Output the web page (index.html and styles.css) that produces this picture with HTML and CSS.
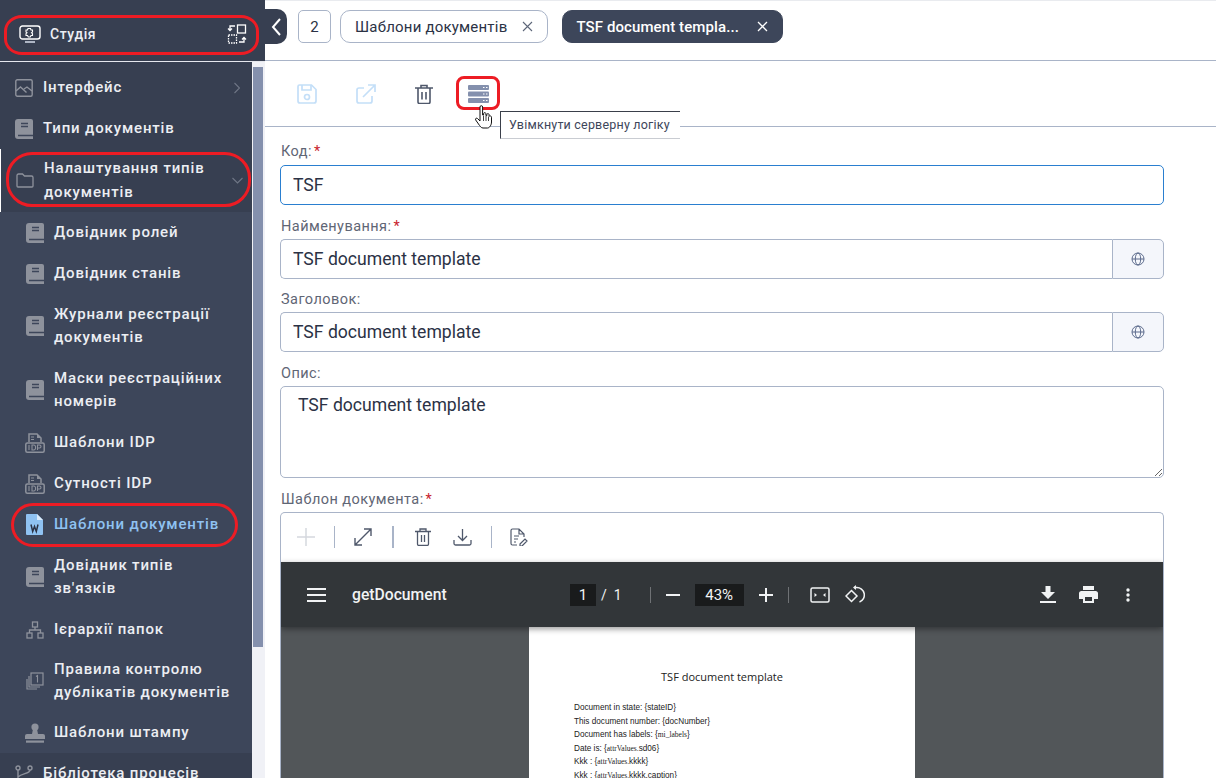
FILE: index.html
```html
<!DOCTYPE html>
<html lang="uk">
<head>
    <meta charset="UTF-8">
    <title>TSF document template</title>
    <link rel="stylesheet" href="styles.css">
</head>
<body>
    <svg class="defs" width="0" height="0">
        <symbol id="book" viewBox="0 0 18 20">
            <path d="M3 0h13a2 2 0 0 1 2 2v18H3a3 3 0 0 1-3-3V3a3 3 0 0 1 3-3z" fill="#8e929c"/>
            <path d="M6 4.500h7M6 7.500h7M3 16.500h15" stroke="#3d465a" stroke-width="1.400"/>
        </symbol>
        <symbol id="idp" viewBox="0 0 20 20">
            <path d="M4 9V1h8l4 4v4" fill="none" stroke="#8e929c" stroke-width="1.500"/>
            <path d="M12 1v4h4z" fill="#8e929c"/>
            <path d="M6 4h3M6 6.500h3" stroke="#8e929c" stroke-width="1.200"/>
            <rect x=".8" y="10" width="18.400" height="9.200" rx="1.500" fill="none" stroke="#8e929c" stroke-width="1.500"/>
            <path d="M4 12v5M7 12v5h2a2 2 0 0 0 1.500-2.500A2 2 0 0 0 9 12zM12.500 17v-5h2a1.500 1.500 0 0 1 0 3h-2" fill="none" stroke="#8e929c" stroke-width="1.100"/>
        </symbol>
    </svg>

    <aside class="sidebar">
        <div class="studio">
            <svg class="studio-icon" width="22" height="18" viewBox="0 0 22 18"><rect x="1" y="1" width="20" height="13" rx="2.500" fill="none" stroke="#fff" stroke-width="1.400"/><path d="M6 17h10" stroke="#aeb5c4" stroke-width="2"/><path d="M9 3.500h2.500l.5 1.500h1.500v2l-1 .7 1 1V10.500H12L11.200 12H9.300l-.8-1.500H7V8.700l1-1-1-.7V5h1.500z" fill="none" stroke="#fff" stroke-width="1.100"/></svg>
            <span class="studio-name">Студія</span>
            <svg class="studio-switch" width="20" height="20" viewBox="0 0 20 20" fill="none" stroke="#fff" stroke-width="1.300"><rect x="10.500" y="1" width="8" height="8"/><rect x="1.500" y="11" width="8" height="8" stroke-dasharray="1.500 1"/><path d="M8 2H3v4M1 4.500l2 2 2-2M12 18h5v-4M15 15.500l2-2 2 2"/></svg>
        </div>
        <div class="menu-wrap">
            <nav class="menu">
                <div class="group first">
                    <div class="item top">
                        <svg class="ico" width="18" height="18" viewBox="0 0 18 18" fill="none" stroke="#8e929c" stroke-width="1.400"><rect x=".8" y=".8" width="16.400" height="16.400" rx="1.500"/><path d="M1 12l4.500-4 6 5.500M9 10l3-2 5 4"/></svg>
                        <span>Інтерфейс</span>
                        <svg class="chev" width="6" height="12" viewBox="0 0 6 12" fill="none" stroke="#6f7686" stroke-width="1.100"><path d="M.5 1l5 5-5 5"/></svg>
                    </div>
                    <div class="item top">
                        <svg class="ico" width="18" height="20"><use href="#book"/></svg>
                        <span>Типи документів</span>
                    </div>
                    <div class="item top double active">
                        <svg class="ico" width="18" height="15" viewBox="0 0 18 15" fill="none" stroke="#8e929c" stroke-width="1.300"><path d="M1 13V2.500A1.500 1.500 0 0 1 2.500 1h4l2 2h7A1.500 1.500 0 0 1 17 4.500V13a1 1 0 0 1-1 1H2a1 1 0 0 1-1-1z"/></svg>
                        <span>Налаштування типів документів</span>
                        <svg class="chev" width="11" height="7" viewBox="0 0 11 7" fill="none" stroke="#6f7686" stroke-width="1.100"><path d="M.5 1l5 5 5-5"/></svg>
                    </div>
                </div>
                <div class="group sub">
                    <div class="item"><svg class="ico" width="18" height="20"><use href="#book"/></svg><span>Довідник ролей</span></div>
                    <div class="item"><svg class="ico" width="18" height="20"><use href="#book"/></svg><span>Довідник станів</span></div>
                    <div class="item double"><svg class="ico" width="18" height="20"><use href="#book"/></svg><span>Журнали реєстрації документів</span></div>
                    <div class="item double"><svg class="ico" width="18" height="20"><use href="#book"/></svg><span>Маски реєстраційних номерів</span></div>
                    <div class="item"><svg class="ico wide" width="20" height="20"><use href="#idp"/></svg><span>Шаблони IDP</span></div>
                    <div class="item"><svg class="ico wide" width="20" height="20"><use href="#idp"/></svg><span>Сутності IDP</span></div>
                    <div class="item current">
                        <svg class="ico word" width="17" height="21" viewBox="0 0 17 21"><path d="M1 0h10l6 6v14a1 1 0 0 1-1 1H1a1 1 0 0 1-1-1V1a1 1 0 0 1 1-1z" fill="#8fc2f2"/><path d="M11 0l6 6h-6z" fill="#dcecfb"/><path d="M3.500 10.500l1.700 7 1.800-5 1.800 5 1.700-7" fill="none" stroke="#2b3245" stroke-width="1.500" transform="translate(1.500 0)"/></svg>
                        <span>Шаблони документів</span>
                    </div>
                    <div class="item double"><svg class="ico" width="18" height="20"><use href="#book"/></svg><span>Довідник типів зв'язків</span></div>
                    <div class="item">
                        <svg class="ico" width="18" height="18" viewBox="0 0 18 18" fill="none" stroke="#8e929c" stroke-width="1.300"><rect x="6.500" y="1" width="5" height="5"/><rect x="1" y="12" width="5" height="5"/><rect x="12" y="12" width="5" height="5"/><path d="M9 6v3M3.500 12V9h11v3"/></svg>
                        <span>Ієрархії папок</span>
                    </div>
                    <div class="item double short">
                        <svg class="ico" width="18" height="18" viewBox="0 0 18 18" fill="none" stroke="#8e929c" stroke-width="1.200"><rect x="5" y="1" width="12" height="12"/><path d="M3 4v11h11M1 7v10h10"/><path d="M10 4.500l1.500-1v7" stroke-width="1.100"/></svg>
                        <span>Правила контролю дублікатів документів</span>
                    </div>
                    <div class="item">
                        <svg class="ico wide" width="20" height="20" viewBox="0 0 20 20" fill="#8e929c"><circle cx="10" cy="4" r="3.600"/><path d="M8 6h4l1 5h5a2 2 0 0 1 2 2v3H0v-3a2 2 0 0 1 2-2h5z"/><rect x="1" y="17.500" width="18" height="2.200"/></svg>
                        <span>Шаблони штампу</span>
                    </div>
                </div>
                <div class="group">
                    <div class="item top">
                        <svg class="ico" width="18" height="18" viewBox="0 0 18 18" fill="none" stroke="#8e929c" stroke-width="1.400"><circle cx="3" cy="3" r="2"/><circle cx="15" cy="3" r="2"/><path d="M3 5v12M15 5c0 4-8 3-12 7"/></svg>
                        <span>Бібліотека процесів</span>
                    </div>
                </div>
            </nav>
            <div class="scrollbar"><div class="thumb"></div></div>
        </div>
    </aside>

    <main class="main">
        <div class="tabs">
            <button class="collapse"><svg width="10" height="18" viewBox="0 0 10 18" fill="none" stroke="#fff" stroke-width="2"><path d="M9 1L2 9l7 8"/></svg></button>
            <span class="tab count">2</span>
            <span class="tab">Шаблони документів<svg class="x" width="11" height="11" viewBox="0 0 11 11" stroke="#5d6679" stroke-width="1.100"><path d="M1 1l9 9M10 1l-9 9"/></svg></span>
            <span class="tab dark">TSF document templa...<svg class="x" width="11" height="11" viewBox="0 0 11 11" stroke="#fff" stroke-width="1.300"><path d="M1 1l9 9M10 1l-9 9"/></svg></span>
        </div>

        <div class="toolbar">
            <svg width="20" height="20" viewBox="0 0 20 20" fill="none" stroke="#c4dff8" stroke-width="1.700"><path d="M2.500 1h12L19 5.500V17a2 2 0 0 1-2 2H3a2 2 0 0 1-2-2V2.500A1.500 1.500 0 0 1 2.500 1z"/><path d="M5 1v5h9V1"/><circle cx="10" cy="13" r="2.500"/></svg>
            <svg width="20" height="20" viewBox="0 0 20 20" fill="none" stroke="#c4dff8" stroke-width="1.700"><path d="M16 12v5a2 2 0 0 1-2 2H3a2 2 0 0 1-2-2V6a2 2 0 0 1 2-2h5"/><path d="M7 13L19 1M12 1h7v7"/></svg>
            <svg width="18" height="20" viewBox="0 0 18 20" fill="none" stroke="#4f586b" stroke-width="1.600"><path d="M0 4h18M6 4V1.500h6V4M3 4v14a1.500 1.500 0 0 0 1.500 1.500h9A1.500 1.500 0 0 0 15 18V4M7 8v7.500M11 8v7.500"/></svg>
            <svg class="server" width="21" height="18" viewBox="0 0 21 18"><rect width="21" height="5" rx="1" fill="#8490ad"/><rect y="6.500" width="21" height="5" rx="1" fill="#8490ad"/><rect y="13" width="21" height="5" rx="1" fill="#8490ad"/><path d="M15 2.500h1.500M18 2.500h1.500M15 9h1.500M18 9h1.500M15 15.500h1.500M18 15.500h1.500" stroke="#fff" stroke-width="1"/></svg>
        </div>

        <form class="form">
            <label class="label label-first">Код:<em>*</em></label>
            <input class="input focus" value="TSF">

            <label class="label">Найменування:<em>*</em></label>
            <div class="input-group">
                <input class="input" value="TSF document template">
                <span class="addon"><svg width="14" height="14" viewBox="0 0 14 14" fill="none" stroke="#5c6b8c" stroke-width="1"><circle cx="7" cy="7" r="6"/><ellipse cx="7" cy="7" rx="2.700" ry="6"/><path d="M1 7h12"/></svg></span>
            </div>

            <label class="label label-tight">Заголовок:</label>
            <div class="input-group">
                <input class="input" value="TSF document template">
                <span class="addon"><svg width="14" height="14" viewBox="0 0 14 14" fill="none" stroke="#5c6b8c" stroke-width="1"><circle cx="7" cy="7" r="6"/><ellipse cx="7" cy="7" rx="2.700" ry="6"/><path d="M1 7h12"/></svg></span>
            </div>

            <label class="label">Опис:</label>
            <textarea class="input area">TSF document template</textarea>

            <label class="label">Шаблон документа:<em>*</em></label>
            <div class="doc-box">
                <div class="doc-tools">
                    <svg width="20" height="20" viewBox="0 0 20 20" stroke="#d5d8de" stroke-width="1.500"><path d="M10 1v18M1 10h18"/></svg>
                    <i class="sep"></i>
                    <svg width="20" height="20" viewBox="0 0 20 20" fill="none" stroke="#4f586b" stroke-width="1.400"><path d="M2 18L18 2M11 2h7v7M2 11v7h7"/></svg>
                    <i class="sep thick"></i>
                    <svg width="16" height="18" viewBox="0 0 16 18" fill="none" stroke="#4f586b" stroke-width="1.300"><path d="M0 3.500h16M5 3.500V1h6v2.500M2.500 3.500V16A1.500 1.500 0 0 0 4 17.500h8a1.500 1.500 0 0 0 1.500-1.500V3.500M6.500 7v7M9.500 7v7"/></svg>
                    <svg class="tool-down" width="19" height="18" viewBox="0 0 19 18" fill="none" stroke="#4f586b" stroke-width="1.300"><path d="M9.500 1v11M5 8l4.500 4.500L14 8M1 12v3.500A1.500 1.500 0 0 0 2.500 17h14a1.500 1.500 0 0 0 1.500-1.500V12"/></svg>
                    <i class="sep"></i>
                    <svg width="18" height="18" viewBox="0 0 18 18" fill="none" stroke="#4f586b" stroke-width="1.200"><path d="M7 17H2.500A1.500 1.500 0 0 1 1 15.500v-13A1.500 1.500 0 0 1 2.500 1H9l5 5v3M9 1v5h5M4 8h5M4 11h4M4 14h2M10 16l5-5 2 2-5 5h-2z"/></svg>
                </div>
                <div class="pdf-bar">
                    <svg class="hamb" width="19" height="14" viewBox="0 0 19 14" stroke="#f1f3f4" stroke-width="2"><path d="M0 1h19M0 7h19M0 13h19"/></svg>
                    <span class="pdf-title">getDocument</span>
                    <span class="pdf-box page-num">1</span>
                    <span class="pdf-text slash">/</span>
                    <span class="pdf-text pages">1</span>
                    <i class="pdf-sep first"></i>
                    <svg class="zoom-out" width="14" height="2" viewBox="0 0 14 2" stroke="#f1f3f4" stroke-width="2"><path d="M0 1h14"/></svg>
                    <span class="pdf-box zoom-val">43%</span>
                    <svg class="zoom-in" width="14" height="14" viewBox="0 0 14 14" stroke="#f1f3f4" stroke-width="2"><path d="M0 7h14M7 0v14"/></svg>
                    <i class="pdf-sep"></i>
                    <svg class="fit" width="20" height="16" viewBox="0 0 20 16" fill="none" stroke="#f1f3f4" stroke-width="1.500"><rect x="1" y="1" width="18" height="14" rx="1.500"/><path d="M7 8L4.500 6v4zM13 8l2.500-2v4z" fill="#f1f3f4" stroke="none"/></svg>
                    <svg class="rotate" width="20" height="20" viewBox="0 0 20 20" fill="none" stroke="#f1f3f4" stroke-width="1.500"><path d="M1 11l5.500-5.500 5.500 5.500-5.500 5.500z"/><path d="M9 2.500h2.500a7.500 7.500 0 0 1 3 14.500"/><path d="M11 0L8 2.500l3 2.500" fill="#f1f3f4" stroke="none"/></svg>
                    <svg class="save" width="16" height="17" viewBox="0 0 16 17" fill="#f1f3f4"><path d="M5.500 0h5v6H15l-7 7-7-7h4.500z"/><rect y="15" width="16" height="2"/></svg>
                    <svg class="print" width="19" height="17" viewBox="0 0 19 17" fill="#f1f3f4"><path d="M4 0h11v4H4zM2.500 5h14A2.500 2.500 0 0 1 19 7.500V13h-4v4H4v-4H0V7.500A2.500 2.500 0 0 1 2.500 5zM6 11v4h7v-4z"/></svg>
                    <svg class="more" width="4" height="14" viewBox="0 0 4 14" fill="#f1f3f4"><circle cx="2" cy="2" r="1.700"/><circle cx="2" cy="7" r="1.700"/><circle cx="2" cy="12" r="1.700"/></svg>
                </div>
                <div class="pdf-body">
                    <div class="pdf-page">
                        <h3 class="page-title">TSF document template</h3>
                        <p>Document in state: {stateID}</p>
                        <p>This document number: {docNumber}</p>
                        <p>Document has labels: {<span class="serif">mi_labels</span>}</p>
                        <p>Date is: {<span class="serif">attrValues.</span>sd06}</p>
                        <p>Kkk : {<span class="serif">attrValues.</span>kkkk}</p>
                        <p>Kkk : {<span class="serif">attrValues.</span>kkkk.caption}</p>
                    </div>
                </div>
            </div>
        </form>
    </main>

    <!-- hand drawn marks from the screenshot -->
    <div class="mark mark-studio"></div>
    <div class="mark mark-settings"></div>
    <div class="mark mark-templates"></div>
    <div class="mark mark-server"></div>
    <div class="tooltip">Увімкнути серверну логіку</div>
    <svg class="hand" width="17" height="24" viewBox="0 0 17 24"><path d="M5 2a1.300 1.300 0 0 1 2.600 0v8l1 .2V8.500a1.200 1.200 0 0 1 2.300 0v2l.9.200V9.500a1.200 1.200 0 0 1 2.300 0v1.500l.5.200a1.200 1.200 0 0 1 1.900 1V17c0 3-2 6-4 6H8c-2 0-3-2-4.500-4L.7 15c-.8-1.200.7-2.500 1.800-1.500L5 16z" fill="#fff" stroke="#111" stroke-width="1"/><path d="M8.500 11v5M11 11v5M13.500 11.500V16" stroke="#111" stroke-width=".8"/></svg>
</body>
</html>
```

FILE: styles.css
```css
* {
    margin: 0;
    padding: 0;
    box-sizing: border-box;
}

body {
    width: 100vw;
    height: 100vh;
    display: flex;
    overflow: hidden;
    background: #fff;
    font-family: Roboto, sans-serif;
    color: #2b3245;
}

.defs {
    position: absolute;
}

/* sidebar */
.sidebar {
    width: 265px;
    flex-shrink: 0;
    display: flex;
    flex-direction: column;
    background: #373f51;
    color: #eceef3;
}

.studio {
    height: 62px;
    flex-shrink: 0;
    display: flex;
    align-items: center;
    padding: 6px 18px 0 19px;
    border-bottom: 1px solid #e6e8ee;
}

.studio-name {
    margin-left: 9px;
    flex: 1;
    font-size: 14px;
    font-weight: 500;
    letter-spacing: 0.6px;
}

.menu-wrap {
    flex: 1;
    min-height: 0;
    display: flex;
}

.menu {
    width: 252px;
    overflow: hidden;
    font-size: 15px;
    font-weight: 500;
    letter-spacing: 0.85px;
    line-height: 23.500px;
}

.scrollbar {
    width: 13px;
    padding: 5px 2px 0 1px;
    background: #f0f1f6;
}

.thumb {
    height: 580px;
    background: #8490ad;
}

.group {
    background: #373f51;
}

.group.first {
    padding-top: 5px;
}

.group.sub {
    background: #3d465a;
}

.group.sub .item {
    padding-right: 20px;
}

.item {
    height: 41px;
    display: flex;
    align-items: center;
    padding-left: 26px;
}

.item.top {
    padding-left: 15px;
}

.item.double {
    height: 64px;
}

.item.double.short {
    height: 62px;
}

.item.active {
    height: 63px;
    border-left: 1px solid #fff;
    padding-left: 15px;
}

.item.current {
    color: #8fc2f2;
}

.ico {
    flex-shrink: 0;
    margin-right: 10px;
}

.ico.wide {
    margin: 0 9px 0 -1px;
}

.ico.word {
    margin-right: 11px;
}

.item span {
    flex: 1;
}

.item.active span {
    flex: none;
    width: 188px;
}

.chev {
    margin-right: 12px;
}

.active .chev {
    margin-right: 0;
}

/* main */
.main {
    flex: 1;
    min-width: 0;
    display: flex;
    flex-direction: column;
}

.tabs {
    height: 61px;
    flex-shrink: 0;
    display: flex;
    align-items: flex-start;
    padding-top: 9px;
    border-top: 1px solid #e9ebef;
    border-bottom: 1px solid #a9b4c8;
    font-size: 15px;
    letter-spacing: 0.2px;
}

.collapse {
    width: 22px;
    height: 35px;
    margin: -1px 11px 0 0;
    border: none;
    border-radius: 0 10px 10px 0;
    background: #373f51;
    display: flex;
    align-items: center;
    justify-content: center;
}

.tab {
    height: 33px;
    display: flex;
    align-items: center;
    padding: 0 14px;
    margin-right: 14px;
    border: 1px solid #a9b4c8;
    border-radius: 10px;
}

.tab.count {
    width: 33px;
    margin-right: 9px;
    padding: 0;
    justify-content: center;
    border-radius: 5px;
}

.tab.dark {
    padding-left: 13px;
    background: #3d465a;
    border-color: #3d465a;
    color: #fff;
    font-weight: 500;
    letter-spacing: 0.1px;
}

.x {
    margin-left: 15px;
}

.dark .x {
    margin-left: 18px;
}

.toolbar {
    height: 66px;
    flex-shrink: 0;
    display: flex;
    align-items: center;
    gap: 39px;
    padding-left: 32px;
    border-bottom: 1px solid #a9b4c8;
}

.toolbar .server {
    margin-left: -4px;
}

.form {
    width: 914px;
    padding: 0 15px;
    flex: 1;
    min-height: 0;
    display: flex;
    flex-direction: column;
}

.label {
    height: 34px;
    padding: 13px 0 0 1px;
    flex-shrink: 0;
    font-size: 14.500px;
    line-height: 17px;
    letter-spacing: 0.45px;
    color: #5f6675;
}

.label-first {
    height: 38px;
    padding-top: 16px;
}

.label-tight {
    height: 33px;
    padding-top: 12px;
}

.label em {
    margin-left: 2px;
    color: #c8232c;
    font-style: normal;
}

.input {
    width: 100%;
    height: 40px;
    flex-shrink: 0;
    padding: 0 12px 1px;
    border: 1px solid #a9b4c8;
    border-radius: 5px;
    font-family: Roboto, sans-serif;
    font-size: 17.600px;
    color: #2b3245;
    outline: none;
}

.input.focus {
    border-color: #2a7fd0;
}

.input-group {
    display: flex;
    flex-shrink: 0;
}

.input-group .input {
    flex: 1;
    min-width: 0;
    border-radius: 5px 0 0 5px;
    border-right: none;
}

.addon {
    width: 52px;
    height: 40px;
    flex-shrink: 0;
    display: flex;
    align-items: center;
    justify-content: center;
    background: #f4f6fb;
    border: 1px solid #a9b4c8;
    border-radius: 0 5px 5px 0;
}

.area {
    height: 92px;
    padding: 8px 17px;
    line-height: 21px;
    resize: vertical;
}

.doc-box {
    flex: 1;
    min-height: 0;
    border: 1px solid #a9b4c8;
    border-bottom: none;
    border-radius: 5px 5px 0 0;
    overflow: hidden;
    display: flex;
    flex-direction: column;
}

.doc-tools {
    height: 49px;
    flex-shrink: 0;
    display: flex;
    align-items: center;
    padding: 0 0 1px 15px;
}

.doc-tools .sep {
    width: 1px;
    height: 22px;
    margin: 0 18px;
    background: #a9b4c8;
}

.doc-tools .sep.thick {
    width: 2px;
    margin: 0 21px 0 19px;
}

.doc-tools .tool-down {
    margin: 0 1px 0 22px;
}

.pdf-bar {
    height: 65px;
    flex-shrink: 0;
    display: flex;
    align-items: center;
    background: #323639;
    color: #f1f3f4;
    box-shadow: 0 2px 6px rgba(0, 0, 0, 0.4);
    position: relative;
}

.hamb {
    margin-left: 26px;
}

.pdf-title {
    width: 218px;
    margin-left: 26px;
    font-size: 15.700px;
    font-weight: 500;
}

.pdf-box {
    height: 22px;
    display: flex;
    align-items: center;
    justify-content: center;
    background: #191b1c;
    font-size: 15px;
}

.page-num {
    width: 26px;
}

.pdf-text {
    font-size: 14px;
}

.slash {
    margin-left: 5px;
}

.pages {
    margin-left: 7px;
}

.pdf-sep {
    width: 1px;
    height: 16px;
    margin-left: 15px;
    background: #6f7275;
}

.pdf-sep.first {
    margin-left: 28px;
}

.zoom-out {
    margin-left: 15px;
}

.zoom-val {
    width: 49px;
    margin-left: 15px;
}

.zoom-in {
    margin-left: 15px;
}

.fit {
    margin-left: 21px;
}

.rotate {
    margin-left: 15px;
}

.save {
    margin-left: 175px;
}

.print {
    margin-left: 23px;
}

.more {
    margin-left: 28px;
}

.pdf-body {
    flex: 1;
    min-height: 0;
    display: flex;
    justify-content: center;
    background: #525659;
}

.pdf-page {
    width: 386px;
    padding: 43px 45px 0;
    background: #fff;
    font-family: "Liberation Sans", sans-serif;
    font-size: 8.200px;
    line-height: 13.500px;
    color: #222;
}

.page-title {
    margin-bottom: 17px;
    text-align: center;
    font-family: "Open Sans", sans-serif;
    font-size: 11px;
    font-weight: 400;
    line-height: 14px;
}

.serif {
    font-family: "Liberation Serif", serif;
    font-size: 7.500px;
}

/* annotations painted on top of the screenshot */
.mark {
    position: absolute;
    border: 3px solid #ed1c24;
    pointer-events: none;
}

.mark-studio {
    left: 4px;
    top: 15px;
    width: 255px;
    height: 40px;
    border-radius: 18px / 16px;
}

.mark-settings {
    left: 6px;
    top: 152px;
    width: 245px;
    height: 55px;
    border-radius: 26px;
}

.mark-templates {
    left: 11px;
    top: 503px;
    width: 227px;
    height: 44px;
    border-radius: 22px;
}

.mark-server {
    left: 456px;
    top: 76px;
    width: 44px;
    height: 34px;
    border-radius: 8px;
}

.tooltip {
    position: absolute;
    left: 500px;
    top: 111px;
    width: 180px;
    height: 28px;
    padding-left: 8px;
    background: #fff;
    border-top: 1px solid #3a3f4a;
    border-left: 1px solid #3a3f4a;
    border-bottom: 1px solid #c9ccd2;
    font-size: 12.500px;
    line-height: 26px;
    letter-spacing: 0.2px;
    color: #3d465a;
}

.hand {
    position: absolute;
    left: 475px;
    top: 105px;
}
```
